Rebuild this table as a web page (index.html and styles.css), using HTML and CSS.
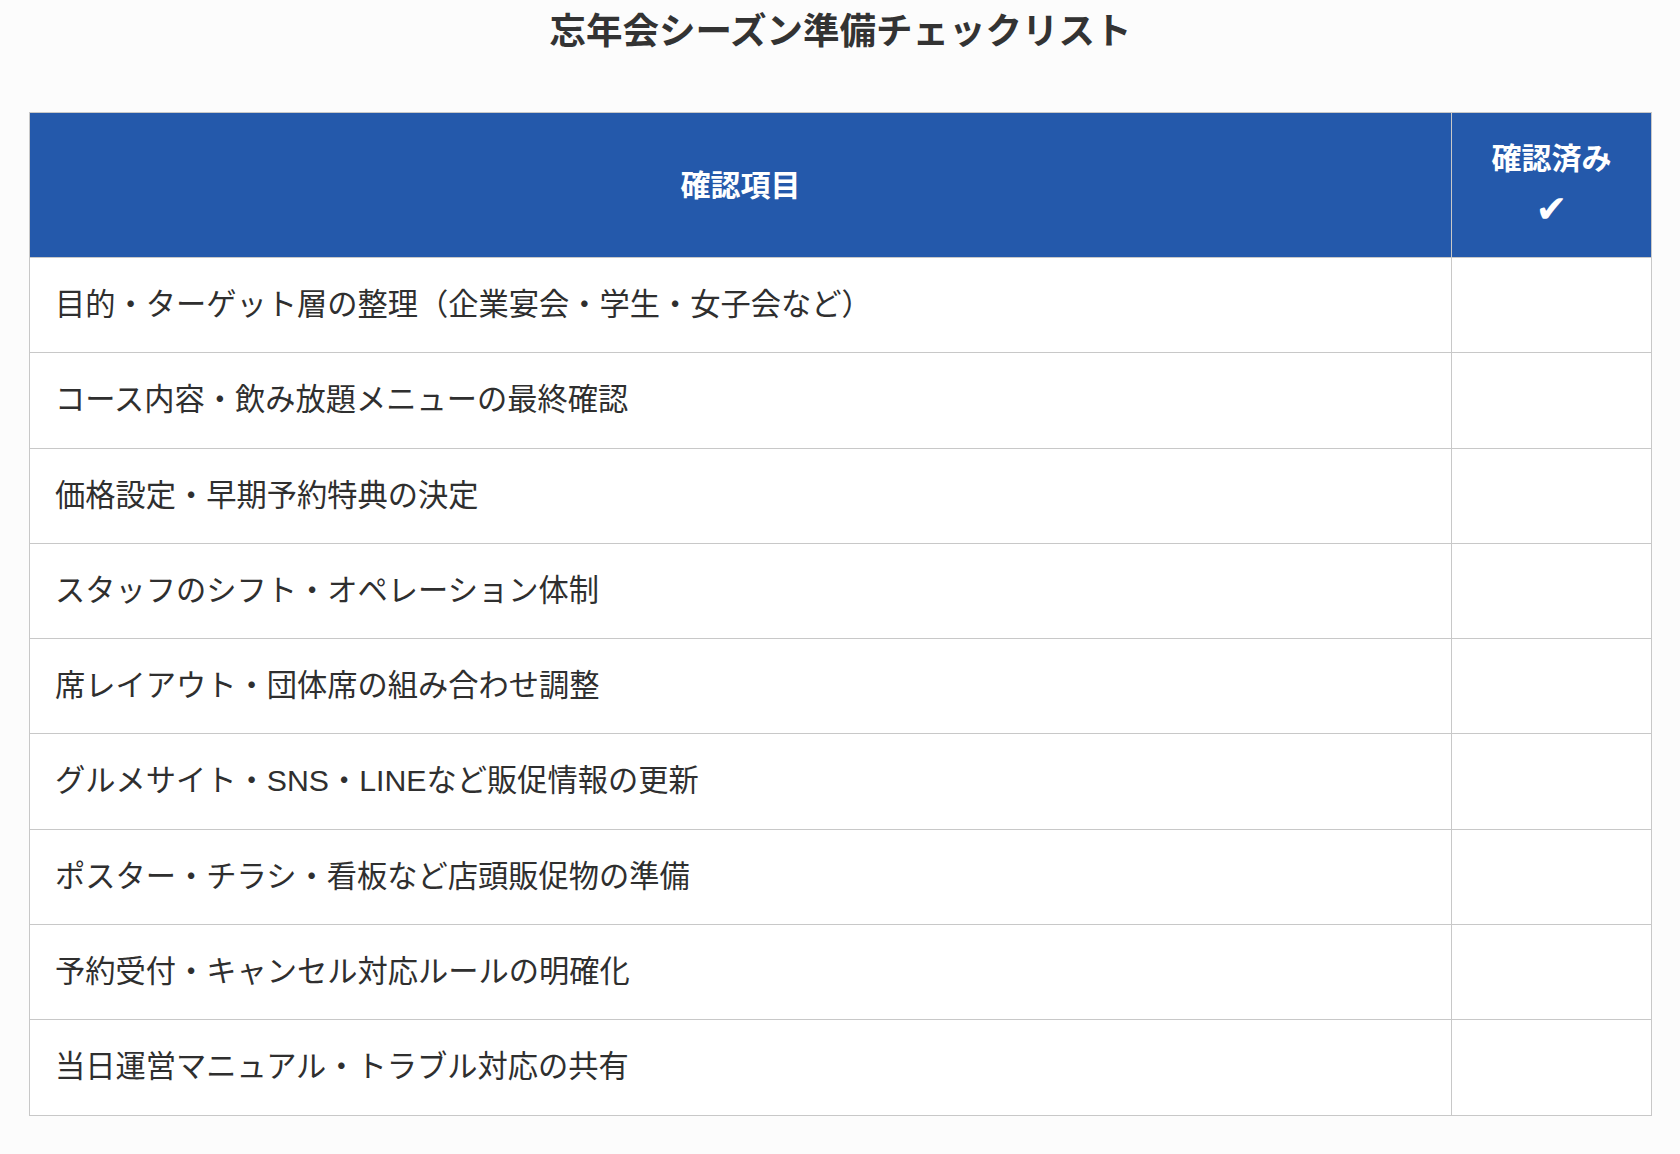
FILE: index.html
```html
<!DOCTYPE html>
<html lang="ja">
<head>
<meta charset="utf-8">
<title>忘年会シーズン準備チェックリスト</title>
<link rel="stylesheet" href="styles.css">
</head>
<body>
<main class="page">
  <h1 class="title">忘年会シーズン準備チェックリスト</h1>
  <table class="checklist">
    <thead>
      <tr>
        <th class="col-item">確認項目</th>
        <th class="col-check">確認済み<br><span class="check">✔</span></th>
      </tr>
    </thead>
    <tbody>
      <tr><td class="item">目的・ターゲット層の整理（企業宴会・学生・女子会など）</td><td class="box"></td></tr>
      <tr><td class="item">コース内容・飲み放題メニューの最終確認</td><td class="box"></td></tr>
      <tr><td class="item">価格設定・早期予約特典の決定</td><td class="box"></td></tr>
      <tr><td class="item">スタッフのシフト・オペレーション体制</td><td class="box"></td></tr>
      <tr><td class="item">席レイアウト・団体席の組み合わせ調整</td><td class="box"></td></tr>
      <tr><td class="item">グルメサイト・SNS・LINEなど販促情報の更新</td><td class="box"></td></tr>
      <tr><td class="item">ポスター・チラシ・看板など店頭販促物の準備</td><td class="box"></td></tr>
      <tr><td class="item">予約受付・キャンセル対応ルールの明確化</td><td class="box"></td></tr>
      <tr><td class="item">当日運営マニュアル・トラブル対応の共有</td><td class="box"></td></tr>
    </tbody>
  </table>
</main>
</body>
</html>
```

FILE: styles.css
```css
html, body {
  margin: 0;
  padding: 0;
  background: #fcfcfc;
}

body {
  font-family: "Liberation Sans", "Noto Sans CJK JP", sans-serif;
  color: #333333;
}

.page {
  padding: 0 28px 0 29px;
}

.title {
  margin: 0;
  padding-top: 7px;
  height: 50px;
  line-height: 50px;
  font-size: 36.5px;
  font-weight: 700;
  text-align: center;
  color: #333333;
  margin-bottom: 55px;
}

.checklist {
  width: 100%;
  border-collapse: collapse;
  table-layout: fixed;
  background: #ffffff;
}

.checklist th,
.checklist td {
  border: 1px solid #c8c8c8;
}

.checklist th {
  background: #2459ab;
  color: #ffffff;
  font-weight: 700;
  font-size: 30px;
  line-height: 51px;
  padding: 20px 10px;
  text-align: center;
  vertical-align: middle;
}

.col-check {
  width: 179px;
}

.check {
  font-family: "DejaVu Sans", sans-serif;
  font-size: 38px;
}

.checklist td {
  font-size: 30.25px;
  line-height: 46.3px;
  padding: 24px 20px 24px 25px;
  vertical-align: middle;
  color: #2f2f2f;
}

.box {
  text-align: center;
}
```
